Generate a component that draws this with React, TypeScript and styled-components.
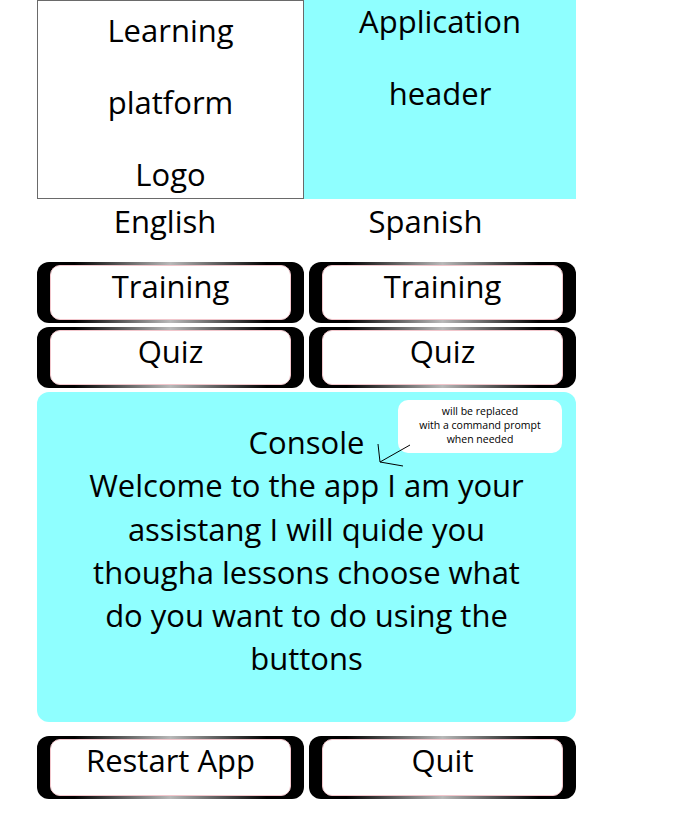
import React from 'react';
import styled, { createGlobalStyle } from 'styled-components';

const GlobalStyle = createGlobalStyle`
  body {
    margin: 0;
    background: #ffffff;
    font-family: "Open Sans", "Noto Sans", sans-serif;
    color: #000000;
  }
`;

const Page = styled.div`
  width: 539px;
  margin-left: 37px;
  display: flex;
  flex-direction: column;
`;

const TopRow = styled.div`
  display: grid;
  grid-template-columns: 267px 272px;
  height: 199px;
`;

const TitleStack = styled.div<{ $top: number }>`
  box-sizing: border-box;
  height: 199px;
  overflow: hidden;
  display: flex;
  flex-direction: column;
  align-items: center;
  gap: 32px;
  padding-top: ${p => p.$top}px;
  font-size: 31px;
  line-height: 40px;
`;

const LogoBox = styled(TitleStack)`
  border: 1px solid #6a6a6a;
  background: #ffffff;
`;

const HeaderBox = styled(TitleStack)`
  background: #8fffff;
`;

const LangRow = styled.div`
  display: grid;
  grid-template-columns: 267px 272px;
  column-gap: 5px;
  height: 63px;
  font-size: 31px;
  line-height: 44px;
`;

const LangLabel = styled.div<{ $shift: number }>`
  text-align: center;
  padding-right: ${p => p.$shift}px;
`;

const ButtonGrid = styled.div`
  display: grid;
  grid-template-columns: 267px 267px;
  column-gap: 5px;
  row-gap: 4px;
`;

const ShellButton = styled.div<{ $tall?: boolean }>`
  height: ${p => (p.$tall ? 63 : 61)}px;
  border-radius: 12px;
  background: linear-gradient(to right, #000 14%, #b8b8b8 50%, #000 86%);
  padding: 3px 13px;
  box-sizing: border-box;
  display: flex;
`;

const ButtonFace = styled.div`
  flex: 1;
  background: #ffffff;
  border: 1px solid #f2c6cc;
  border-radius: 10px;
  display: flex;
  justify-content: center;
  align-items: flex-start;
  font-size: 31px;
  line-height: 40px;
`;

const ConsolePanel = styled.div`
  position: relative;
  margin-top: 4px;
  height: 330px;
  background: #8fffff;
  border-radius: 12px;
  box-sizing: border-box;
  padding: 29px 40px 0;
  text-align: center;
  font-size: 31px;
  line-height: 43.3px;
`;

const Bubble = styled.div`
  position: absolute;
  left: 361px;
  top: 8px;
  width: 164px;
  height: 53px;
  background: #ffffff;
  border-radius: 10px;
  font-size: 10.5px;
  line-height: 14px;
  padding-top: 4px;
  box-sizing: border-box;
  text-align: center;
`;

const Arrow = styled.svg`
  position: absolute;
  left: 338px;
  top: 48px;
`;

const BottomRow = styled.div`
  margin-top: 14px;
  display: grid;
  grid-template-columns: 267px 267px;
  column-gap: 5px;
`;

const menu = ['Training', 'Training', 'Quiz', 'Quiz'];

const App = () => {
  return (
    <Page>
      <GlobalStyle />
      <TopRow>
        <LogoBox $top={9}>
          <span>Learning</span>
          <span>platform</span>
          <span>Logo</span>
        </LogoBox>
        <HeaderBox $top={1}>
          <span>Application</span>
          <span>header</span>
        </HeaderBox>
      </TopRow>
      <LangRow>
        <LangLabel $shift={11}>English</LangLabel>
        <LangLabel $shift={39}>Spanish</LangLabel>
      </LangRow>
      <ButtonGrid>
        {menu.map((label, i) => (
          <ShellButton key={i}>
            <ButtonFace>{label}</ButtonFace>
          </ShellButton>
        ))}
      </ButtonGrid>
      <ConsolePanel>
        <div>Console</div>
        <div>
          Welcome to the app I am your assistang I will quide you thougha lessons choose what do you want
          to do using the buttons
        </div>
        <Bubble>
          will be replaced
          <br />
          with a command prompt
          <br />
          when needed
        </Bubble>
        <Arrow width="40" height="30" viewBox="0 0 40 30">
          <path d="M35 5 L5 22 M5 22 L3 4 M5 22 L28 26" stroke="#000" strokeWidth="1" fill="none" />
        </Arrow>
      </ConsolePanel>
      <BottomRow>
        <ShellButton $tall>
          <ButtonFace>Restart App</ButtonFace>
        </ShellButton>
        <ShellButton $tall>
          <ButtonFace>Quit</ButtonFace>
        </ShellButton>
      </BottomRow>
    </Page>
  );
};

export default App;
